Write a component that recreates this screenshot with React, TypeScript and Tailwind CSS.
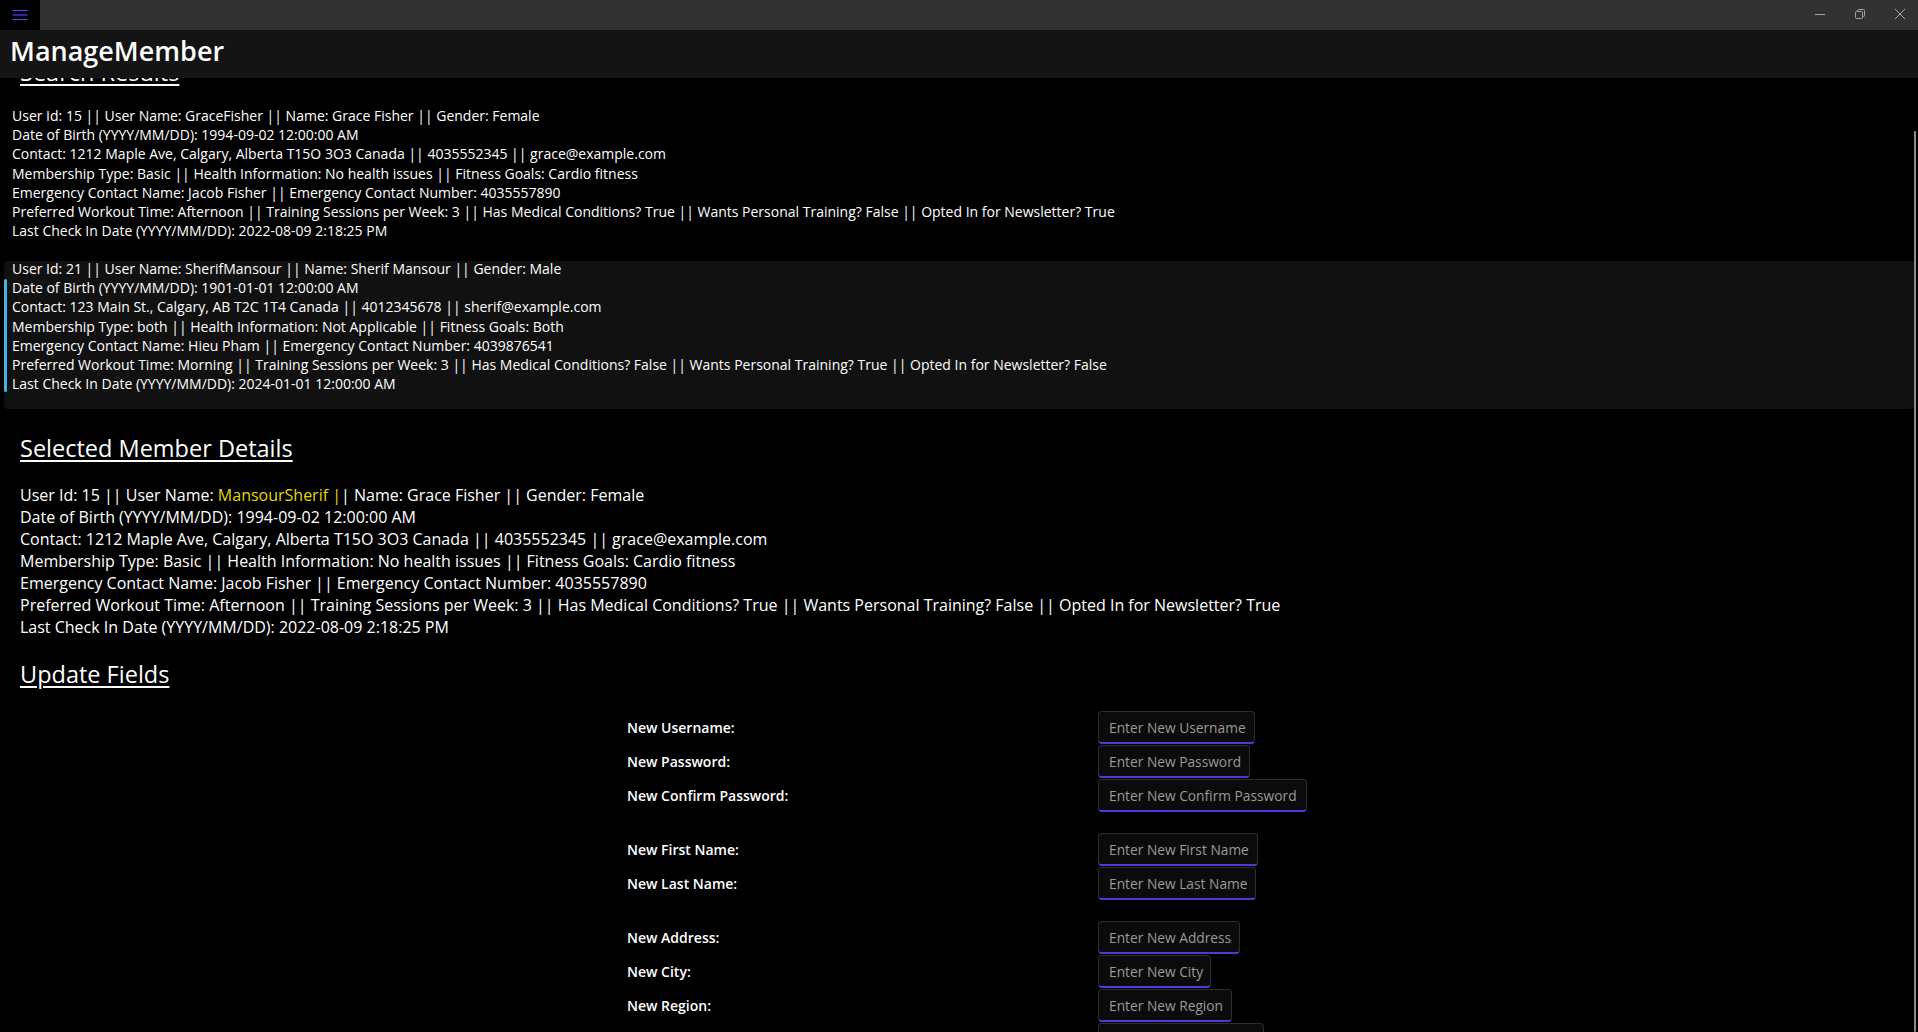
import React from 'react';

interface Member {
  id: number;
  userName: string;
  name: string;
  gender: string;
  dob: string;
  address: string;
  phone: string;
  email: string;
  membership: string;
  health: string;
  goals: string;
  emergencyName: string;
  emergencyNumber: string;
  workoutTime: string;
  sessions: number;
  medical: boolean;
  personalTraining: boolean;
  newsletter: boolean;
  lastCheckIn: string;
}

const members: Member[] = [
  {
    id: 15,
    userName: 'GraceFisher',
    name: 'Grace Fisher',
    gender: 'Female',
    dob: '1994-09-02 12:00:00 AM',
    address: '1212 Maple Ave, Calgary, Alberta T15O 3O3 Canada',
    phone: '4035552345',
    email: 'grace@example.com',
    membership: 'Basic',
    health: 'No health issues',
    goals: 'Cardio fitness',
    emergencyName: 'Jacob Fisher',
    emergencyNumber: '4035557890',
    workoutTime: 'Afternoon',
    sessions: 3,
    medical: true,
    personalTraining: false,
    newsletter: true,
    lastCheckIn: '2022-08-09 2:18:25 PM',
  },
  {
    id: 21,
    userName: 'SherifMansour',
    name: 'Sherif Mansour',
    gender: 'Male',
    dob: '1901-01-01 12:00:00 AM',
    address: '123 Main St., Calgary, AB T2C 1T4 Canada',
    phone: '4012345678',
    email: 'sherif@example.com',
    membership: 'both',
    health: 'Not Applicable',
    goals: 'Both',
    emergencyName: 'Hieu Pham',
    emergencyNumber: '4039876541',
    workoutTime: 'Morning',
    sessions: 3,
    medical: false,
    personalTraining: true,
    newsletter: false,
    lastCheckIn: '2024-01-01 12:00:00 AM',
  },
];

const yesNo = (v: boolean) => (v ? 'True' : 'False');

// lines 2..7 are shared between the list and the details block
function detailLines(m: Member) {
  return [
    `Date of Birth (YYYY/MM/DD): ${m.dob}`,
    `Contact: ${m.address} || ${m.phone} || ${m.email}`,
    `Membership Type: ${m.membership} || Health Information: ${m.health} || Fitness Goals: ${m.goals}`,
    `Emergency Contact Name: ${m.emergencyName} || Emergency Contact Number: ${m.emergencyNumber}`,
    `Preferred Workout Time: ${m.workoutTime} || Training Sessions per Week: ${m.sessions} || Has Medical Conditions? ${yesNo(
      m.medical
    )} || Wants Personal Training? ${yesNo(m.personalTraining)} || Opted In for Newsletter? ${yesNo(m.newsletter)}`,
    `Last Check In Date (YYYY/MM/DD): ${m.lastCheckIn}`,
  ];
}

const formGroups: [string, string, string][][] = [
  [
    ['New Username:', 'Enter New Username', 'w-[157px]'],
    ['New Password:', 'Enter New Password', 'w-[152px]'],
    ['New Confirm Password:', 'Enter New Confirm Password', 'w-[209px]'],
  ],
  [
    ['New First Name:', 'Enter New First Name', 'w-[160px]'],
    ['New Last Name:', 'Enter New Last Name', 'w-[158px]'],
  ],
  [
    ['New Address:', 'Enter New Address', 'w-[142px]'],
    ['New City:', 'Enter New City', 'w-[113px]'],
    ['New Region:', 'Enter New Region', 'w-[134px]'],
    ['New Postal Code:', 'Enter New Postal Code', 'w-[166px]'],
  ],
];

function TitleBar() {
  return (
    <div className="flex h-[30px] shrink-0 bg-[#323232]">
      <div className="flex h-[30px] w-[40px] items-center justify-center bg-black">
        <svg width="16" height="12" viewBox="0 0 16 12" fill="none" stroke="#5640f2" strokeWidth="1.2">
          <line x1="0.5" y1="1.5" x2="15.5" y2="1.5" />
          <line x1="0.5" y1="6" x2="15.5" y2="6" />
          <line x1="0.5" y1="10.5" x2="15.5" y2="10.5" />
        </svg>
      </div>
      <div className="ml-auto flex items-center gap-[30px] pb-[3px] pr-[13px]">
        <svg width="10" height="10" viewBox="0 0 10 10" fill="none" stroke="#a3a3a3" strokeWidth="1">
          <line x1="0" y1="5.5" x2="10" y2="5.5" />
        </svg>
        <svg width="10" height="10" viewBox="0 0 10 10" fill="none" stroke="#a3a3a3" strokeWidth="1">
          <rect x="0.5" y="2.5" width="7" height="7" rx="1" />
          <path d="M2.5 2.5V1.5a1 1 0 0 1 1-1h5a1 1 0 0 1 1 1v5a1 1 0 0 1-1 1h-1" />
        </svg>
        <svg width="10" height="10" viewBox="0 0 10 10" fill="none" stroke="#a3a3a3" strokeWidth="1">
          <line x1="0" y1="0" x2="10" y2="10" />
          <line x1="10" y1="0" x2="0" y2="10" />
        </svg>
      </div>
    </div>
  );
}

function SearchResultItem({ member, selected }: { member: Member; selected: boolean }) {
  return (
    <div className={`relative mb-[5px] h-[148px] rounded-[4px] pl-[8px] ${selected ? 'bg-[#111111]' : ''}`}>
      {selected && (
        <div className="absolute left-0 top-[18px] bottom-[17px] w-[3px] rounded-full bg-[#47b1e8]" />
      )}
      <div className="relative -top-[2px] text-[14px] leading-[19.2px]">
        <div>
          {`User Id: ${member.id} || User Name: ${member.userName} || Name: ${member.name} || Gender: ${member.gender}`}
        </div>
        {detailLines(member).map((line) => (
          <div key={line}>{line}</div>
        ))}
      </div>
    </div>
  );
}

export default function App() {
  const selected = members[0];

  return (
    <div className="relative flex h-[1032px] w-full flex-col overflow-hidden bg-black font-['Open_Sans','Noto_Sans',sans-serif] text-white">
      <TitleBar />
      <header className="flex h-[48px] shrink-0 items-center bg-[#141414] pb-[5px] pl-[10px] text-[27px] font-semibold">
        ManageMember
      </header>

      <main className="flex-1 overflow-hidden">
        <div className="-mt-[22px]">
          <h2 className="ml-[20px] text-[23.5px] leading-[32px] underline underline-offset-[3px]">Search Results</h2>

          {/* Search results list */}
          <div className="mx-[4px] mt-[20px]">
            {members.map((m, i) => (
              <SearchResultItem key={m.id} member={m} selected={i === 1} />
            ))}
          </div>

          <h2 className="ml-[20px] mt-[23px] text-[23.5px] leading-[32px] underline underline-offset-[3px]">
            Selected Member Details
          </h2>
          <div className="ml-[20px] mt-[20px] text-[16px] leading-[22px]">
            <div>
              User Id: {selected.id} || User Name: <span className="text-[#e6d800]">MansourSherif |</span>| Name:{' '}
              {selected.name} || Gender: {selected.gender}
            </div>
            {detailLines(selected).map((line) => (
              <div key={line}>{line}</div>
            ))}
          </div>

          <h2 className="ml-[20px] mt-[20px] text-[23.5px] leading-[32px] underline underline-offset-[3px]">
            Update Fields
          </h2>

          {/* Update form */}
          <div className="ml-[627px] mt-[21px] flex flex-col">
            {formGroups.map((group, gi) => (
              <div key={gi} className={`flex flex-col gap-[1px] ${gi > 0 ? 'mt-[21px]' : ''}`}>
                {group.map(([label, placeholder, width]) => (
                  <div key={label} className="grid h-[33px] grid-cols-[471px_auto] items-center">
                    <label className="text-[14px] font-semibold">{label}</label>
                    <input
                      placeholder={placeholder}
                      className={`${width} h-[33px] rounded-[4px] border border-[#2c2c2c] border-b-2 border-b-[#4d3be0] bg-[#0b0b0b] pl-[10px] pr-[4px] text-[13.75px] text-white outline-none placeholder:text-[#9a9a9a]`}
                    />
                  </div>
                ))}
              </div>
            ))}
          </div>
        </div>
      </main>

      {/* scroll indicator */}
      <div className="absolute bottom-0 right-[2px] top-[131px] w-[2px] rounded-full bg-[#8a8a8a]" />
    </div>
  );
}
